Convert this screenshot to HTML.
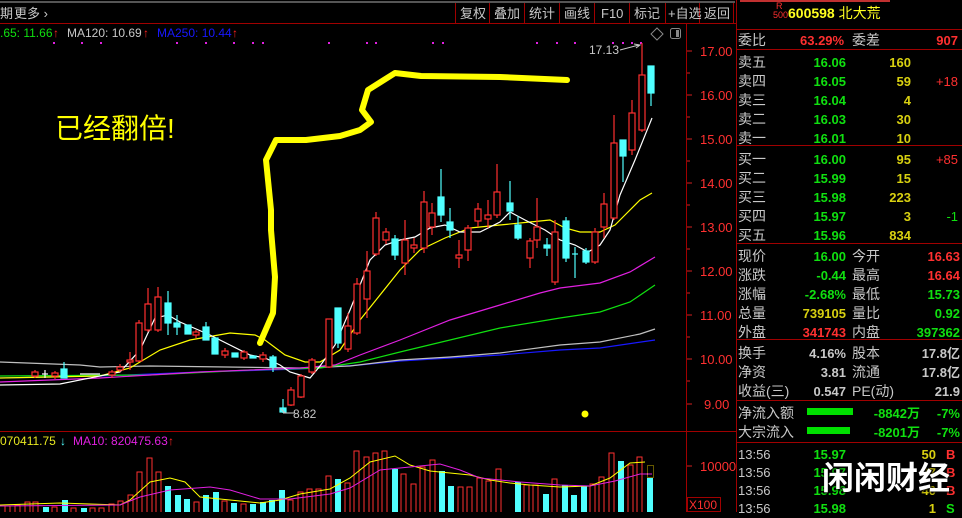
<!DOCTYPE html>
<html><head><meta charset="utf-8"><style>
*{margin:0;padding:0;box-sizing:border-box}
body{width:962px;height:512px;background:#000;overflow:hidden;position:relative;font-family:"Liberation Sans","Noto Sans CJK SC",sans-serif}
.t{position:absolute;white-space:nowrap;font-size:13px;line-height:15px}
.l{color:#c8c8c8}
.g{color:#10e010;font-weight:bold}
.y{color:#d8d010;font-weight:bold}
.r{color:#ff3030;font-weight:bold}
.w{color:#c8c8c8;font-weight:bold}
.ra{text-align:right}
</style></head><body>
<svg width="962" height="512" style="position:absolute;left:0;top:0" font-family="Liberation Sans, Noto Sans CJK SC, sans-serif">
<line x1="0" y1="2" x2="735" y2="2" stroke="#555" stroke-width="2"/>
<line x1="0" y1="23.5" x2="737" y2="23.5" stroke="#a00000"/>
<g stroke="#a00000"><line x1="455.5" y1="3" x2="455.5" y2="23"/><line x1="489.5" y1="3" x2="489.5" y2="23"/><line x1="524.5" y1="3" x2="524.5" y2="23"/><line x1="559.5" y1="3" x2="559.5" y2="23"/><line x1="594.5" y1="3" x2="594.5" y2="23"/><line x1="629.5" y1="3" x2="629.5" y2="23"/><line x1="665.5" y1="3" x2="665.5" y2="23"/><line x1="699.5" y1="3" x2="699.5" y2="23"/><line x1="733.5" y1="3" x2="733.5" y2="23"/></g>
<g fill="#c8c8c8" font-size="13"><text x="0" y="18">期</text><text x="14" y="18">更多 ›</text>
<text x="460" y="18">复权</text><text x="494" y="18">叠加</text><text x="529" y="18">统计</text><text x="564" y="18">画线</text><text x="601" y="18">F10</text><text x="634" y="18">标记</text><text x="668" y="18">+自选</text><text x="704" y="18">返回</text></g>
<!-- axis -->
<line x1="686.5" y1="24" x2="686.5" y2="512" stroke="#a00000"/>
<line x1="736.5" y1="0" x2="736.5" y2="512" stroke="#a00000"/>
<line x1="0" y1="431.5" x2="736" y2="431.5" stroke="#a00000"/>
<g stroke="#d02020"><line x1="687" y1="51" x2="692" y2="51"/><line x1="687" y1="95" x2="692" y2="95"/><line x1="687" y1="139" x2="692" y2="139"/><line x1="687" y1="183" x2="692" y2="183"/><line x1="687" y1="227" x2="692" y2="227"/><line x1="687" y1="271" x2="692" y2="271"/><line x1="687" y1="315" x2="692" y2="315"/><line x1="687" y1="359" x2="692" y2="359"/><line x1="687" y1="404" x2="692" y2="404"/><line x1="687" y1="466" x2="692" y2="466"/>
<line x1="687" y1="73" x2="690" y2="73"/><line x1="687" y1="117" x2="690" y2="117"/><line x1="687" y1="161" x2="690" y2="161"/><line x1="687" y1="205" x2="690" y2="205"/><line x1="687" y1="249" x2="690" y2="249"/><line x1="687" y1="293" x2="690" y2="293"/><line x1="687" y1="337" x2="690" y2="337"/><line x1="687" y1="381" x2="690" y2="381"/></g>
<g fill="#ff3030" font-size="13"><text x="700" y="56">17.00</text><text x="700" y="100">16.00</text><text x="700" y="144">15.00</text><text x="700" y="188">14.00</text><text x="700" y="232">13.00</text><text x="700" y="276">12.00</text><text x="700" y="320">11.00</text><text x="700" y="364">10.00</text><text x="704" y="409">9.00</text><text x="700" y="471">10000</text></g>
<rect x="687.5" y="497.5" width="33" height="14" fill="none" stroke="#a00000"/>
<text x="689" y="509" fill="#ff3030" font-size="12">X100</text>
<!-- legend -->
<text x="0" y="37" font-size="12" fill="#10e010">.65: 11.66</text><text x="53" y="37" font-size="12" fill="#ff2020">↑</text>
<text x="67" y="37" font-size="12" fill="#c8c8c8">MA120: 10.69</text><text x="143" y="37" font-size="12" fill="#ff2020">↑</text>
<text x="157" y="37" font-size="12" fill="#1818ff">MA250: 10.44</text><text x="232" y="37" font-size="12" fill="#ff2020">↑</text>
<g fill="#e020e0"><rect x="53" y="42" width="2" height="2"/><rect x="81" y="42" width="2" height="2"/><rect x="100" y="42" width="2" height="2"/><rect x="176" y="42" width="2" height="2"/><rect x="205" y="42" width="2" height="2"/><rect x="233" y="42" width="2" height="2"/><rect x="252" y="42" width="2" height="2"/><rect x="262" y="42" width="2" height="2"/><rect x="328" y="42" width="2" height="2"/><rect x="366" y="42" width="2" height="2"/><rect x="375" y="42" width="2" height="2"/><rect x="432" y="42" width="2" height="2"/><rect x="442" y="42" width="2" height="2"/><rect x="536" y="42" width="2" height="2"/><rect x="556" y="42" width="2" height="2"/><rect x="574" y="42" width="2" height="2"/><rect x="612" y="42" width="2" height="2"/><rect x="622" y="42" width="2" height="2"/><rect x="631" y="42" width="2" height="2"/><rect x="640" y="42" width="2" height="2"/></g>
<text x="589" y="54" font-size="12" fill="#c8c8c8">17.13</text>
<path d="M620 50 L639 45 M634 44 L640 45 L636 48" stroke="#c8c8c8" fill="none"/>
<path d="M657 28 L663 34 L657 40 L651 34Z" stroke="#888" fill="none"/>
<rect x="670.5" y="28.5" width="10" height="10" rx="2" stroke="#888" fill="none"/><rect x="676" y="30" width="3" height="7" fill="#888"/>
<!-- MAs -->
<g fill="none" stroke-width="1.2">
<polyline stroke="#1818ff" points="0,378 100,376 200,372 300,369 360,365 400,361 500,355 560,350 600,348 655,340"/>
<polyline stroke="#c0c0c0" points="0,362 80,365 100,367 150,366 300,368 350,366 400,360 450,357 500,353 560,345 600,342 640,334 655,329"/>
<polyline stroke="#10e010" points="0,376 150,375 250,370 320,368 360,362 400,352 450,340 500,328 560,318 600,312 630,302 655,285"/>
<polyline stroke="#e020e0" points="0,382 100,378 200,372 300,368 335,365 360,355 400,340 450,320 500,305 540,293 560,288 600,283 630,272 655,257"/>
<polyline stroke="#ffff00" points="0,378 100,376 130,368 160,350 190,340 230,333 255,335 265,340 285,355 305,362 320,362 340,350 360,320 380,295 400,270 420,250 445,238 470,228 500,225 530,222 550,220 565,228 580,232 600,232 615,225 625,215 640,200 652,193"/>
<polyline stroke="#ffffff" points="0,385 60,384 120,372 140,350 155,318 168,315 180,322 210,335 250,355 265,358 280,365 290,372 310,378 320,366 335,345 350,310 370,260 385,245 400,240 415,237 430,228 445,225 460,232 480,232 500,222 510,212 525,220 545,230 560,240 575,245 588,252 600,245 610,230 620,195 635,160 652,118"/>
</g>
<!-- candles -->
<g stroke="#ff3030" fill="#000" stroke-width="1.2">
<line x1="35" y1="370" x2="35" y2="378"/><rect x="32" y="372" width="6" height="4"/>
<line x1="55" y1="371" x2="55" y2="379"/><rect x="52" y="373" width="6" height="3"/>
<line x1="112" y1="370" x2="112" y2="378"/><rect x="109" y="372" width="6" height="3"/>
<line x1="120" y1="364" x2="120" y2="372"/><rect x="117" y="367" width="6" height="3"/>
<line x1="130" y1="352" x2="130" y2="370"/><rect x="127" y="360" width="6" height="2"/>
<line x1="139" y1="320" x2="139" y2="362"/><rect x="136" y="323" width="6" height="38"/>
<line x1="148" y1="288" x2="148" y2="332"/><rect x="145" y="304" width="6" height="26"/>
<line x1="158" y1="287" x2="158" y2="332"/><rect x="155" y="297" width="6" height="33"/>
<line x1="196" y1="330" x2="196" y2="338"/><rect x="193" y="332" width="6" height="3"/>
<line x1="225" y1="348" x2="225" y2="358"/><rect x="222" y="351" width="6" height="4"/>
<line x1="244" y1="350" x2="244" y2="360"/><rect x="241" y="352" width="6" height="6"/>
<line x1="263" y1="352" x2="263" y2="362"/><rect x="260" y="355" width="6" height="4"/>
<line x1="291" y1="387" x2="291" y2="406"/><rect x="288" y="390" width="6" height="15"/>
<line x1="301" y1="374" x2="301" y2="398"/><rect x="298" y="376" width="6" height="21"/>
<line x1="312" y1="358" x2="312" y2="374"/><rect x="309" y="360" width="6" height="12"/>
<line x1="329" y1="319" x2="329" y2="368"/><rect x="326" y="319" width="6" height="48"/>
<line x1="348" y1="313" x2="348" y2="352"/><rect x="345" y="326" width="6" height="23"/>
<line x1="357" y1="278" x2="357" y2="335"/><rect x="354" y="284" width="6" height="49"/>
<line x1="367" y1="251" x2="367" y2="318"/><rect x="364" y="271" width="6" height="28"/>
<line x1="376" y1="212" x2="376" y2="256"/><rect x="373" y="218" width="6" height="36"/>
<line x1="386" y1="228" x2="386" y2="244"/><rect x="383" y="232" width="6" height="8"/>
<line x1="405" y1="220" x2="405" y2="275"/><rect x="402" y="240" width="6" height="23"/>
<line x1="414" y1="238" x2="414" y2="253"/><rect x="411" y="245" width="6" height="3"/>
<line x1="424" y1="191" x2="424" y2="253"/><rect x="421" y="202" width="6" height="46"/>
<line x1="432" y1="203" x2="432" y2="235"/><rect x="429" y="213" width="6" height="14"/>
<line x1="459" y1="240" x2="459" y2="268"/><rect x="456" y="255" width="6" height="3"/>
<line x1="468" y1="225" x2="468" y2="261"/><rect x="465" y="228" width="6" height="22"/>
<line x1="478" y1="203" x2="478" y2="227"/><rect x="475" y="209" width="6" height="12"/>
<line x1="488" y1="200" x2="488" y2="228"/><rect x="485" y="215" width="6" height="4"/>
<line x1="497" y1="164" x2="497" y2="218"/><rect x="494" y="192" width="6" height="23"/>
<line x1="530" y1="238" x2="530" y2="268"/><rect x="527" y="241" width="6" height="17"/>
<line x1="537" y1="198" x2="537" y2="248"/><rect x="534" y="227" width="6" height="13"/>
<line x1="555" y1="220" x2="555" y2="285"/><rect x="552" y="232" width="6" height="50"/>
<line x1="595" y1="228" x2="595" y2="264"/><rect x="592" y="232" width="6" height="30"/>
<line x1="604" y1="193" x2="604" y2="238"/><rect x="601" y="204" width="6" height="23"/>
<line x1="614" y1="115" x2="614" y2="220"/><rect x="611" y="143" width="6" height="75"/>
<line x1="632" y1="100" x2="632" y2="155"/><rect x="629" y="113" width="6" height="37"/>
<line x1="642" y1="43" x2="642" y2="132"/><rect x="639" y="75" width="6" height="55"/>
</g>
<g stroke="#50ffff" fill="#50ffff" stroke-width="1.2">
<line x1="45" y1="370" x2="45" y2="378" stroke="#fff"/><line x1="42" y1="374" x2="48" y2="374" stroke="#fff"/>
<line x1="64" y1="362" x2="64" y2="378"/><rect x="61" y="369" width="6" height="9"/>
<line x1="80" y1="374" x2="100" y2="374" stroke="#fff"/>
<line x1="168" y1="291" x2="168" y2="335"/><rect x="165" y="303" width="6" height="20"/>
<line x1="177" y1="315" x2="177" y2="335"/><rect x="174" y="323" width="6" height="4"/>
<rect x="185" y="325" width="6" height="9"/>
<line x1="206" y1="322" x2="206" y2="340"/><rect x="203" y="327" width="6" height="13"/>
<rect x="212" y="338" width="6" height="16"/>
<rect x="232" y="353" width="6" height="4"/>
<rect x="250" y="356" width="6" height="2"/>
<line x1="273" y1="355" x2="273" y2="372"/><rect x="270" y="357" width="6" height="10"/>
<line x1="283" y1="399" x2="283" y2="413"/><rect x="280" y="408" width="6" height="4"/>
<line x1="338" y1="308" x2="338" y2="348"/><rect x="335" y="308" width="6" height="35"/>
<line x1="395" y1="235" x2="395" y2="260"/><rect x="392" y="239" width="6" height="16"/>
<line x1="441" y1="169" x2="441" y2="222"/><rect x="438" y="197" width="6" height="18"/>
<line x1="450" y1="208" x2="450" y2="238"/><rect x="447" y="222" width="6" height="8"/>
<line x1="510" y1="181" x2="510" y2="220"/><rect x="507" y="203" width="6" height="8"/>
<line x1="518" y1="216" x2="518" y2="240"/><rect x="515" y="225" width="6" height="13"/>
<line x1="547" y1="238" x2="547" y2="256"/><rect x="544" y="245" width="6" height="3"/>
<line x1="566" y1="217" x2="566" y2="262"/><rect x="563" y="221" width="6" height="37"/>
<line x1="575" y1="247" x2="575" y2="278"/><line x1="572" y1="254" x2="578" y2="254"/>
<line x1="586" y1="248" x2="586" y2="264"/><rect x="583" y="251" width="6" height="11"/>
<line x1="623" y1="140" x2="623" y2="182"/><rect x="620" y="140" width="6" height="16"/>
<line x1="651" y1="66" x2="651" y2="106"/><rect x="648" y="66" width="6" height="27"/>
</g>
<path d="M285 413 L281 409 M283 413 L295 413" stroke="#c8c8c8" fill="none"/>
<text x="293" y="418" font-size="12" fill="#c8c8c8">8.82</text>
<circle cx="585" cy="414" r="3.5" fill="#ffff00"/>
<!-- hand drawn -->
<path d="M260 343 L273 313 L275 277 L271 230 L271 210 L266 160 L276 140 L306 140 L340 136 L360 130 L371 122 L362 110 L368 90 L395 73 L421 76 L500 77 L567 80" stroke="#ffff00" stroke-width="6" fill="none" stroke-linecap="round" stroke-linejoin="round"/>
<text x="55" y="138" font-size="28" fill="#ffff00">已经翻倍!</text>
<!-- volume -->
<text x="0" y="445" font-size="12" fill="#e8e820">070411.75</text><text x="60" y="445" font-size="12" fill="#50ffff">↓</text>
<text x="73" y="445" font-size="12" fill="#e020e0">MA10: 820475.63</text><text x="168" y="445" font-size="12" fill="#ff2020">↑</text>
<g stroke="#ff3030" fill="none">
<rect x="5" y="506" width="5" height="8"/><rect x="15" y="505" width="5" height="8"/><rect x="25" y="502" width="5" height="12"/><rect x="33" y="502" width="5" height="12"/><rect x="52" y="507" width="5" height="8"/><rect x="71" y="508" width="5" height="8"/><rect x="90" y="508" width="5" height="8"/><rect x="99" y="508" width="5" height="8"/><rect x="109" y="504" width="5" height="10"/><rect x="118" y="501" width="5" height="12"/><rect x="128" y="495" width="5" height="18"/><rect x="137" y="472" width="5" height="42"/><rect x="147" y="458" width="5" height="56"/><rect x="156" y="472" width="5" height="42"/><rect x="194" y="502" width="5" height="12"/><rect x="222" y="501" width="5" height="12"/><rect x="241" y="504" width="5" height="10"/><rect x="288" y="500" width="5" height="14"/><rect x="298" y="492" width="5" height="22"/><rect x="307" y="489" width="5" height="24"/><rect x="316" y="489" width="5" height="24"/><rect x="326" y="476" width="5" height="38"/><rect x="345" y="483" width="5" height="30"/><rect x="354" y="451" width="5" height="62"/><rect x="364" y="457" width="5" height="56"/><rect x="373" y="453" width="5" height="60"/><rect x="382" y="451" width="5" height="62"/><rect x="401" y="474" width="5" height="40"/><rect x="411" y="484" width="5" height="30"/><rect x="420" y="467" width="5" height="46"/><rect x="430" y="460" width="5" height="54"/><rect x="458" y="487" width="5" height="26"/><rect x="467" y="487" width="5" height="26"/><rect x="477" y="478" width="5" height="36"/><rect x="486" y="481" width="5" height="32"/><rect x="496" y="469" width="5" height="44"/><rect x="524" y="485" width="5" height="28"/><rect x="533" y="485" width="5" height="28"/><rect x="552" y="479" width="5" height="34"/><rect x="590" y="484" width="5" height="30"/><rect x="599" y="477" width="5" height="36"/><rect x="609" y="453" width="5" height="60"/><rect x="628" y="465" width="5" height="48"/><rect x="637" y="457" width="5" height="56"/>
</g>
<g fill="#50ffff">
<rect x="43" y="507" width="6" height="5"/><rect x="62" y="500" width="6" height="12"/><rect x="81" y="508" width="6" height="4"/><rect x="165" y="486" width="6" height="26"/><rect x="175" y="495" width="6" height="17"/><rect x="184" y="499" width="6" height="13"/><rect x="203" y="495" width="6" height="17"/><rect x="213" y="492" width="6" height="20"/><rect x="231" y="503" width="6" height="9"/><rect x="250" y="504" width="6" height="8"/><rect x="260" y="502" width="6" height="10"/><rect x="269" y="500" width="6" height="12"/><rect x="279" y="490" width="6" height="22"/><rect x="335" y="479" width="6" height="33"/><rect x="392" y="469" width="6" height="43"/><rect x="439" y="471" width="6" height="41"/><rect x="448" y="486" width="6" height="26"/><rect x="515" y="482" width="6" height="30"/><rect x="543" y="494" width="6" height="18"/><rect x="562" y="485" width="6" height="27"/><rect x="571" y="495" width="6" height="17"/><rect x="581" y="486" width="6" height="26"/><rect x="618" y="461" width="6" height="51"/><rect x="647" y="478" width="6" height="34"/>
</g>
<polyline fill="none" stroke="#ffff00" points="0,505 60,503 120,505 130,500 150,482 170,478 185,482 200,497 230,500 260,503 280,500 300,494 330,489 350,478 370,462 395,456 410,465 430,471 470,475 490,480 510,483 530,485 560,487 590,486 610,478 630,463 645,462"/>
<polyline fill="none" stroke="#e020e0" points="0,506 120,505 140,497 170,490 210,487 230,490 260,499 290,499 330,494 350,488 380,470 420,466 440,464 460,470 480,478 520,482 560,485 590,486 615,481 640,474 652,474"/>
<rect x="647.5" y="465.5" width="6" height="12" fill="none" stroke="#c8b000" stroke-dasharray="1,1"/>
<!-- right panel lines -->
<line x1="740" y1="1" x2="890" y2="1" stroke="#c03030" stroke-width="2"/>
<g stroke="#a00000"><line x1="737" y1="29.5" x2="962" y2="29.5"/><line x1="737" y1="49.5" x2="962" y2="49.5"/><line x1="737" y1="145.5" x2="962" y2="145.5"/><line x1="737" y1="243.5" x2="962" y2="243.5"/><line x1="737" y1="339.5" x2="962" y2="339.5"/><line x1="737" y1="400.5" x2="962" y2="400.5"/><line x1="737" y1="442.5" x2="962" y2="442.5"/></g>
<rect x="807" y="408" width="46" height="7" fill="#00e000"/>
<rect x="807" y="427" width="43" height="7" fill="#00e000"/>
</svg>
<div class="t r" style="left:776px;top:2px;font-size:9px;line-height:9px;font-weight:normal">R</div>
<div class="t r" style="left:773px;top:11px;font-size:9px;line-height:9px;font-weight:normal">500</div>
<div class="t" style="left:788px;top:6px;color:#ffff20;font-size:14px;font-weight:bold">600598 <span style="font-weight:normal">北大荒</span></div>
<div class="t l" style="left:738px;top:33px;font-size:14px">委比</div><div class="t r" style="left:800px;top:33px;width:46px" >63.29%</div><div class="t l" style="left:852px;top:33px;font-size:14px">委差</div><div class="t r ra" style="left:900px;top:33px;width:58px">907</div>
<div style="position:absolute;left:0;top:0">
<div class="t l" style="left:738px;top:53px;font-size:14px;line-height:19px">卖五<br>卖四<br>卖三<br>卖二<br>卖一</div>
<div class="t g ra" style="left:780px;top:53px;width:66px;line-height:19px">16.06<br>16.05<br>16.04<br>16.03<br>16.01</div>
<div class="t y ra" style="left:860px;top:53px;width:51px;line-height:19px">160<br>59<br>4<br>30<br>10</div>
<div class="t ra" style="left:920px;top:53px;width:38px;line-height:19px;color:#ff3030">&nbsp;<br>+18</div>
<div class="t l" style="left:738px;top:150px;font-size:14px;line-height:19px">买一<br>买二<br>买三<br>买四<br>买五</div>
<div class="t g ra" style="left:780px;top:150px;width:66px;line-height:19px">16.00<br>15.99<br>15.98<br>15.97<br>15.96</div>
<div class="t y ra" style="left:860px;top:150px;width:51px;line-height:19px">95<br>15<br>223<br>3<br>834</div>
<div class="t ra" style="left:920px;top:150px;width:38px;line-height:19px;color:#ff3030">+85<br>&nbsp;<br>&nbsp;<br><span style="color:#10e010">-1</span></div>
<div class="t l" style="left:738px;top:247px;font-size:14px;line-height:19px">现价<br>涨跌<br>涨幅<br>总量<br>外盘</div>
<div class="t ra" style="left:770px;top:247px;width:76px;line-height:19px;font-weight:bold"><span style="color:#10e010">16.00</span><br><span style="color:#10e010">-0.44</span><br><span style="color:#10e010">-2.68%</span><br><span style="color:#d8d010">739105</span><br><span style="color:#ff3030">341743</span></div>
<div class="t l" style="left:852px;top:247px;font-size:14px;line-height:19px">今开<br>最高<br>最低<br>量比<br>内盘</div>
<div class="t ra" style="left:890px;top:247px;width:70px;line-height:19px;font-weight:bold"><span style="color:#ff3030">16.63</span><br><span style="color:#ff3030">16.64</span><br><span style="color:#10e010">15.73</span><br><span style="color:#10e010">0.92</span><br><span style="color:#10e010">397362</span></div>
<div class="t l" style="left:738px;top:344px;font-size:14px;line-height:19px">换手<br>净资<br>收益(三)</div>
<div class="t w ra" style="left:770px;top:344px;width:76px;line-height:19px">4.16%<br>3.81<br>0.547</div>
<div class="t l" style="left:852px;top:344px;font-size:14px;line-height:19px">股本<br>流通<br>PE(动)</div>
<div class="t w ra" style="left:890px;top:344px;width:70px;line-height:19px">17.8亿<br>17.8亿<br>21.9</div>
<div class="t l" style="left:738px;top:404px;font-size:14px;line-height:19px">净流入额<br>大宗流入</div>
<div class="t g ra" style="left:860px;top:404px;width:60px;line-height:19px">-8842万<br>-8201万</div>
<div class="t g ra" style="left:920px;top:404px;width:40px;line-height:19px">-7%<br>-7%</div>
<div class="t w" style="left:738px;top:446px;line-height:18px;font-weight:normal;color:#c8c8c8">13:56<br>13:56<br>13:56<br>13:56</div>
<div class="t g ra" style="left:790px;top:446px;width:56px;line-height:18px">15.97<br>15.97<br>15.98<br>15.98</div>
<div class="t y ra" style="left:900px;top:446px;width:36px;line-height:18px">50<br>37<br>40<br>1</div>
<div class="t" style="left:946px;top:446px;line-height:18px;font-weight:bold;color:#ff3030">B<br>B<br>B<br><span style="color:#10e010">S</span></div>
</div>
<div class="t" style="left:822px;top:458px;font-size:32px;line-height:40px;color:#fff;font-weight:bold;text-shadow:0 0 3px #000,1px 1px 2px #000">闲闲财经</div>
</body></html>
